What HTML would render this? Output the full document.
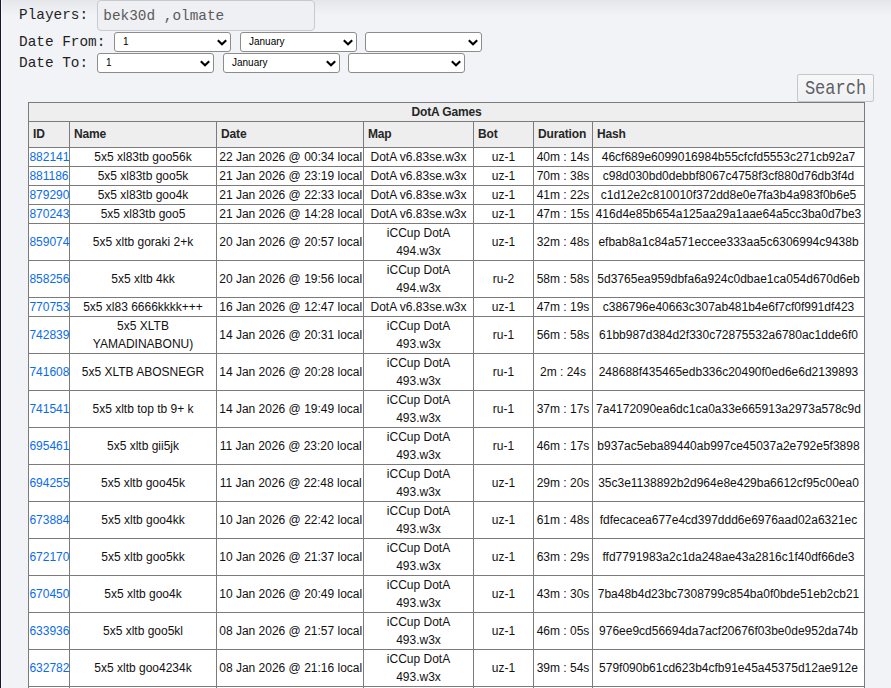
<!DOCTYPE html>
<html><head><meta charset="utf-8">
<style>
html,body{margin:0;padding:0;}
body{width:891px;height:688px;overflow:hidden;position:relative;
 background:#f2f3f7;
 font-family:"Liberation Mono",monospace;}
#lb{position:absolute;left:0;top:0;width:1px;height:688px;background:#15182a;}
#lb2{position:absolute;left:1px;top:0;width:1px;height:688px;background:#f8f9fc;}
.lbl{position:absolute;left:19px;font-size:14.4px;color:#1f1f1f;line-height:16px;}
#players{position:absolute;left:97px;top:0px;width:211px;height:29px;border:1px solid #c8c9cc;border-radius:4px;background:#eff0f4;
 font-size:14.4px;color:#5a5a5a;line-height:30px;padding-left:5.3px;box-sizing:content-box;}
.sel{position:absolute;width:115px;height:18px;border:1px solid #8c8c8c;border-radius:3px;background:#fff;
 font-family:"Liberation Sans",sans-serif;font-size:10px;color:#000;line-height:18px;}
.sel span{position:absolute;left:8px;top:0;}
.sel svg{position:absolute;right:3px;top:6px;}
#search{position:absolute;left:797px;top:74px;width:75px;height:26px;border:1px solid #c4c7cb;border-radius:2px;background:linear-gradient(#f8f8f9,#eff0f2);
 font-size:17px;color:#5c6066;line-height:26px;text-align:center;}
#search span{display:inline-block;transform:translateY(1.6px) scale(1,1.18);transform-origin:50% 50%;}
table{position:absolute;left:28px;top:102px;border-collapse:collapse;table-layout:fixed;width:837px;
 font-family:"Liberation Sans",sans-serif;font-size:12px;color:#111;background:#fff;}
td,th{border:1px solid #7b7b7b;padding:0 1px;text-align:center;vertical-align:middle;line-height:18px;}
th{background:#eeeeee;font-weight:bold;text-align:left;padding:0 4px;color:#262626;letter-spacing:-0.15px;}
th.cap{text-align:center;height:18px;}
tr.hd th{height:23px;padding-bottom:2px;}
td.id{text-align:left;padding-left:0.4px;}
td.dt{padding-left:1.7px;padding-right:0.3px;}
a{color:#0a6cec;}
</style></head><body>
<div style="position:absolute;left:0;top:0px;width:891px;height:1px;background:rgb(230,231,235)"></div>
<div style="position:absolute;left:0;top:1px;width:891px;height:1px;background:rgb(231,232,236)"></div>
<div style="position:absolute;left:0;top:2px;width:891px;height:1px;background:rgb(232,233,237)"></div>
<div style="position:absolute;left:0;top:3px;width:891px;height:1px;background:rgb(232,233,237)"></div>
<div style="position:absolute;left:0;top:4px;width:891px;height:1px;background:rgb(233,234,238)"></div>
<div style="position:absolute;left:0;top:5px;width:891px;height:1px;background:rgb(234,235,239)"></div>
<div style="position:absolute;left:0;top:6px;width:891px;height:1px;background:rgb(235,236,240)"></div>
<div style="position:absolute;left:0;top:7px;width:891px;height:1px;background:rgb(236,237,241)"></div>
<div style="position:absolute;left:0;top:8px;width:891px;height:1px;background:rgb(236,237,241)"></div>
<div style="position:absolute;left:0;top:9px;width:891px;height:1px;background:rgb(237,238,242)"></div>
<div style="position:absolute;left:0;top:10px;width:891px;height:1px;background:rgb(238,239,243)"></div>
<div style="position:absolute;left:0;top:11px;width:891px;height:1px;background:rgb(239,240,244)"></div>
<div style="position:absolute;left:0;top:12px;width:891px;height:1px;background:rgb(240,241,245)"></div>
<div style="position:absolute;left:0;top:13px;width:891px;height:1px;background:rgb(240,241,245)"></div>
<div style="position:absolute;left:0;top:14px;width:891px;height:1px;background:rgb(241,242,246)"></div>
<div style="position:absolute;left:0;top:15px;width:891px;height:1px;background:rgb(242,243,247)"></div>
<div id="lb"></div><div id="lb2"></div>
<div class="lbl" style="top:7px">Players:</div>
<div id="players">bek30d ,olmate</div>
<div class="lbl" style="top:34px">Date From:</div>
<div class="lbl" style="top:55px">Date To:</div>
<div class="sel" style="left:114px;top:32px"><span>1</span><svg width="10" height="7" viewBox="0 0 10 7"><path d="M0.8 1.2 L5 5.3 L9.2 1.2" fill="none" stroke="#000" stroke-width="2.1"/></svg></div>
<div class="sel" style="left:240px;top:32px"><span>January</span><svg width="10" height="7" viewBox="0 0 10 7"><path d="M0.8 1.2 L5 5.3 L9.2 1.2" fill="none" stroke="#000" stroke-width="2.1"/></svg></div>
<div class="sel" style="left:365px;top:32px"><span></span><svg width="10" height="7" viewBox="0 0 10 7"><path d="M0.8 1.2 L5 5.3 L9.2 1.2" fill="none" stroke="#000" stroke-width="2.1"/></svg></div>
<div class="sel" style="left:97px;top:53px"><span>1</span><svg width="10" height="7" viewBox="0 0 10 7"><path d="M0.8 1.2 L5 5.3 L9.2 1.2" fill="none" stroke="#000" stroke-width="2.1"/></svg></div>
<div class="sel" style="left:223px;top:53px"><span>January</span><svg width="10" height="7" viewBox="0 0 10 7"><path d="M0.8 1.2 L5 5.3 L9.2 1.2" fill="none" stroke="#000" stroke-width="2.1"/></svg></div>
<div class="sel" style="left:348px;top:53px"><span></span><svg width="10" height="7" viewBox="0 0 10 7"><path d="M0.8 1.2 L5 5.3 L9.2 1.2" fill="none" stroke="#000" stroke-width="2.1"/></svg></div>
<div id="search"><span>Search</span></div>
<table>
<colgroup><col style="width:41px"><col style="width:147px"><col style="width:147px"><col style="width:110px"><col style="width:60px"><col style="width:59px"><col style="width:272px"></colgroup>
<tr><th class="cap" colspan="7">DotA Games</th></tr>
<tr class="hd"><th>ID</th><th>Name</th><th>Date</th><th>Map</th><th>Bot</th><th>Duration</th><th>Hash</th></tr>
<tr><td class="id"><a>882141</a></td><td>5x5 xl83tb goo56k</td><td class="dt">22 Jan 2026 @ 00:34 local</td><td>DotA v6.83se.w3x</td><td>uz-1</td><td>40m : 14s</td><td>46cf689e6099016984b55cfcfd5553c271cb92a7</td></tr>
<tr><td class="id"><a>881186</a></td><td>5x5 xl83tb goo5k</td><td class="dt">21 Jan 2026 @ 23:19 local</td><td>DotA v6.83se.w3x</td><td>uz-1</td><td>70m : 38s</td><td>c98d030bd0debbf8067c4758f3cf880d76db3f4d</td></tr>
<tr><td class="id"><a>879290</a></td><td>5x5 xl83tb goo4k</td><td class="dt">21 Jan 2026 @ 22:33 local</td><td>DotA v6.83se.w3x</td><td>uz-1</td><td>41m : 22s</td><td>c1d12e2c810010f372dd8e0e7fa3b4a983f0b6e5</td></tr>
<tr><td class="id"><a>870243</a></td><td>5x5 xl83tb goo5</td><td class="dt">21 Jan 2026 @ 14:28 local</td><td>DotA v6.83se.w3x</td><td>uz-1</td><td>47m : 15s</td><td>416d4e85b654a125aa29a1aae64a5cc3ba0d7be3</td></tr>
<tr><td class="id"><a>859074</a></td><td>5x5 xltb goraki 2+k</td><td class="dt">20 Jan 2026 @ 20:57 local</td><td>iCCup DotA 494.w3x</td><td>uz-1</td><td>32m : 48s</td><td>efbab8a1c84a571eccee333aa5c6306994c9438b</td></tr>
<tr><td class="id"><a>858256</a></td><td>5x5 xltb 4kk</td><td class="dt">20 Jan 2026 @ 19:56 local</td><td>iCCup DotA 494.w3x</td><td>ru-2</td><td>58m : 58s</td><td>5d3765ea959dbfa6a924c0dbae1ca054d670d6eb</td></tr>
<tr><td class="id"><a>770753</a></td><td>5x5 xl83 6666kkkk+++</td><td class="dt">16 Jan 2026 @ 12:47 local</td><td>DotA v6.83se.w3x</td><td>uz-1</td><td>47m : 19s</td><td>c386796e40663c307ab481b4e6f7cf0f991df423</td></tr>
<tr><td class="id"><a>742839</a></td><td>5x5 XLTB YAMADINABONU)</td><td class="dt">14 Jan 2026 @ 20:31 local</td><td>iCCup DotA 493.w3x</td><td>ru-1</td><td>56m : 58s</td><td>61bb987d384d2f330c72875532a6780ac1dde6f0</td></tr>
<tr><td class="id"><a>741608</a></td><td>5x5 XLTB ABOSNEGR</td><td class="dt">14 Jan 2026 @ 20:28 local</td><td>iCCup DotA 493.w3x</td><td>ru-1</td><td>2m : 24s</td><td>248688f435465edb336c20490f0ed6e6d2139893</td></tr>
<tr><td class="id"><a>741541</a></td><td>5x5 xltb top tb 9+ k</td><td class="dt">14 Jan 2026 @ 19:49 local</td><td>iCCup DotA 493.w3x</td><td>ru-1</td><td>37m : 17s</td><td>7a4172090ea6dc1ca0a33e665913a2973a578c9d</td></tr>
<tr><td class="id"><a>695461</a></td><td>5x5 xltb gii5jk</td><td class="dt">11 Jan 2026 @ 23:20 local</td><td>iCCup DotA 493.w3x</td><td>ru-1</td><td>46m : 17s</td><td>b937ac5eba89440ab997ce45037a2e792e5f3898</td></tr>
<tr><td class="id"><a>694255</a></td><td>5x5 xltb goo45k</td><td class="dt">11 Jan 2026 @ 22:48 local</td><td>iCCup DotA 493.w3x</td><td>uz-1</td><td>29m : 20s</td><td>35c3e1138892b2d964e8e429ba6612cf95c00ea0</td></tr>
<tr><td class="id"><a>673884</a></td><td>5x5 xltb goo4kk</td><td class="dt">10 Jan 2026 @ 22:42 local</td><td>iCCup DotA 493.w3x</td><td>uz-1</td><td>61m : 48s</td><td>fdfecacea677e4cd397ddd6e6976aad02a6321ec</td></tr>
<tr><td class="id"><a>672170</a></td><td>5x5 xltb goo5kk</td><td class="dt">10 Jan 2026 @ 21:37 local</td><td>iCCup DotA 493.w3x</td><td>uz-1</td><td>63m : 29s</td><td>ffd7791983a2c1da248ae43a2816c1f40df66de3</td></tr>
<tr><td class="id"><a>670450</a></td><td>5x5 xltb goo4k</td><td class="dt">10 Jan 2026 @ 20:49 local</td><td>iCCup DotA 493.w3x</td><td>uz-1</td><td>43m : 30s</td><td>7ba48b4d23bc7308799c854ba0f0bde51eb2cb21</td></tr>
<tr><td class="id"><a>633936</a></td><td>5x5 xltb goo5kl</td><td class="dt">08 Jan 2026 @ 21:57 local</td><td>iCCup DotA 493.w3x</td><td>uz-1</td><td>46m : 05s</td><td>976ee9cd56694da7acf20676f03be0de952da74b</td></tr>
<tr><td class="id"><a>632782</a></td><td>5x5 xltb goo4234k</td><td class="dt">08 Jan 2026 @ 21:16 local</td><td>iCCup DotA 493.w3x</td><td>uz-1</td><td>39m : 54s</td><td>579f090b61cd623b4cfb91e45a45375d12ae912e</td></tr>
<tr><td class="id"><a>612345</a></td><td>5x5 xltb goo</td><td class="dt">07 Jan 2026 @ 21:00 local</td><td>iCCup DotA 493.w3x</td><td>uz-1</td><td>40m : 00s</td><td>0000000000000000000000000000000000000000</td></tr>
</table>
</body></html>
